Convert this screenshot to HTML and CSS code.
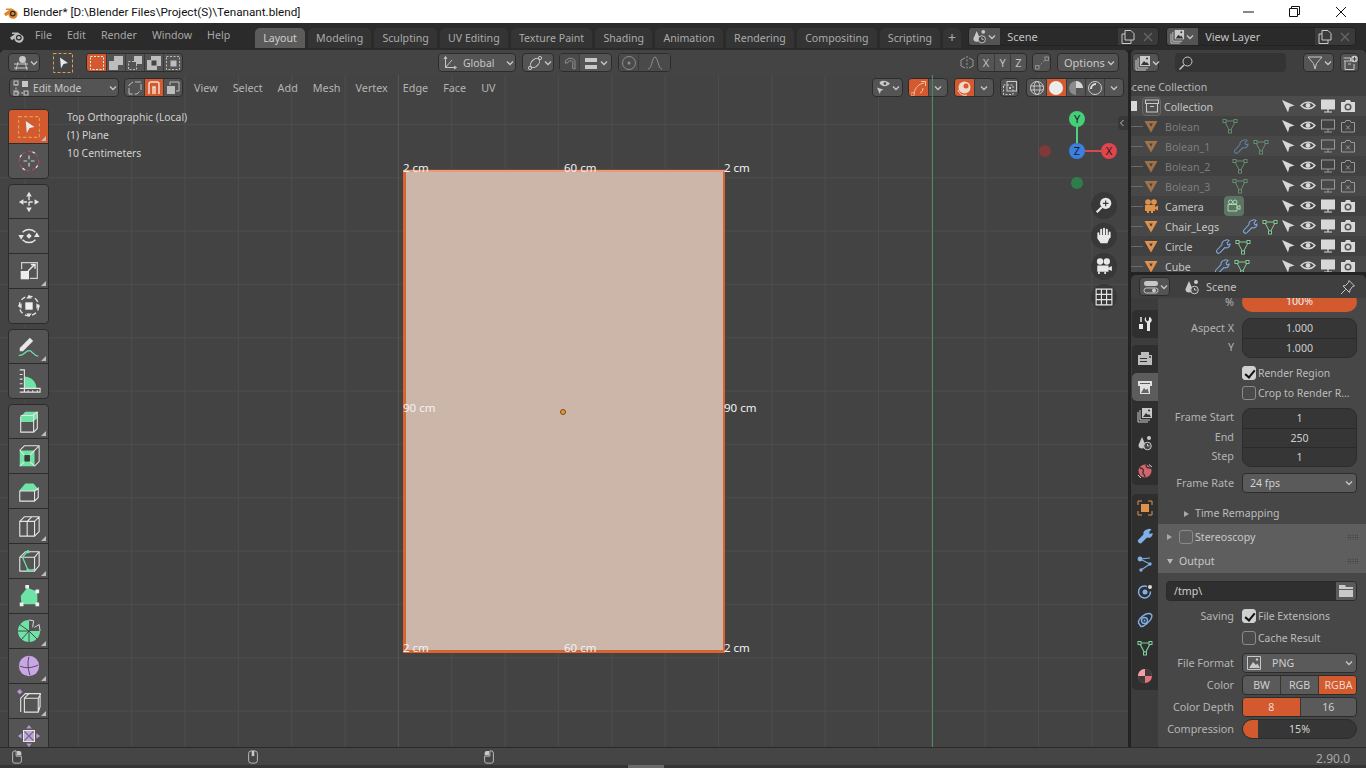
FILE: index.html
```html
<!DOCTYPE html>
<html lang="en">
<head>
    <meta charset="UTF-8">
    <title>Blender* [D:\Blender Files\Project(S)\Tenanant.blend]</title>
    <link rel="stylesheet" href="styles.css">
</head>
<body>
    <!-- shared icons -->
    <svg class="defs" width="0" height="0">
        <symbol id="i-logo" viewBox="0 0 16 16"><path d="M1 9.5 6 6 3 6V4.6h6L14 8a4.6 4.6 0 1 1-8.6 2.6L3 12.2 1.8 11Z" fill="currentColor"/><circle cx="9.8" cy="9.6" r="2.9" fill="#2b2b2b"/><circle cx="9.8" cy="9.6" r="1.7" fill="currentColor"/></symbol>
        <symbol id="i-chev" viewBox="0 0 10 10"><path d="M2 3.5 5 6.5 8 3.5" fill="none" stroke="currentColor" stroke-width="1.3"/></symbol>
        <symbol id="i-view3d" viewBox="0 0 16 16"><circle cx="9.5" cy="4.5" r="3.4" fill="currentColor"/><path d="M1 9h14M1 13h14M5 7 3 15M12 7l2 8" stroke="currentColor" fill="none"/></symbol>
        <symbol id="i-selbox" viewBox="0 0 22 22"><rect x="1.5" y="1.5" width="19" height="19" fill="none" stroke="#e0a050" stroke-dasharray="3 2"/><path d="M8 5.5 16 11 11.5 12 9 16.5Z" fill="#e8e8e8"/></symbol>
        <symbol id="i-mode1" viewBox="0 0 16 16"><rect x="1.5" y="1.5" width="13" height="13" fill="none" stroke="#eee" stroke-dasharray="2 1.5"/></symbol>
        <symbol id="i-mode2" viewBox="0 0 16 16"><path d="M1 6h5V1h9v9h-5v5H1Z" fill="#bdbdbd"/></symbol>
        <symbol id="i-mode3" viewBox="0 0 16 16"><path d="M7 1h8v8H9V7H7Z" fill="#bdbdbd"/><rect x="1.5" y="6.5" width="8" height="8" fill="none" stroke="#bdbdbd" stroke-dasharray="2 1.5"/></symbol>
        <symbol id="i-mode4" viewBox="0 0 16 16"><path d="M1 5h4V1h10v10h-4v4H1Z" fill="#bdbdbd"/><rect x="5.5" y="5.5" width="5" height="5" fill="#454545"/></symbol>
        <symbol id="i-mode5" viewBox="0 0 16 16"><rect x="1.5" y="1.5" width="13" height="13" fill="none" stroke="#bdbdbd" stroke-dasharray="2 1.5"/><rect x="5.5" y="5.5" width="6" height="6" fill="#bdbdbd"/></symbol>
        <symbol id="i-axes" viewBox="0 0 16 16"><path d="M3.5 2v10.5h10M3.5 12.5 10 5" stroke="currentColor" fill="none"/><path d="M2 4 3.5 1.500 5 4M12 11l2.5 1.5L12 14" stroke="currentColor" fill="none"/></symbol>
        <symbol id="i-pivot" viewBox="0 0 16 16"><ellipse cx="8" cy="8" rx="3.5" ry="5.5" transform="rotate(45 8 8)" fill="none" stroke="currentColor"/><circle cx="3" cy="13" r="1.6" fill="none" stroke="currentColor"/><circle cx="13" cy="3" r="1.6" fill="none" stroke="currentColor"/></symbol>
        <symbol id="i-magnet" viewBox="0 0 16 16"><path d="M3 8a5.500 5.500 0 0 1 10-2.500L13 14l-2.500-1 .5-6.500A3.500 3.500 0 0 0 5.500 8Z" fill="none" stroke="currentColor"/></symbol>
        <symbol id="i-snapinc" viewBox="0 0 16 16"><path d="M2 3h12v4H2ZM2 10h12v4H2Z" fill="currentColor"/></symbol>
        <symbol id="i-propdot" viewBox="0 0 16 16"><circle cx="8" cy="8" r="6.5" fill="none" stroke="currentColor"/><circle cx="8" cy="8" r="1.5" fill="currentColor"/></symbol>
        <symbol id="i-bell" viewBox="0 0 16 16"><path d="M1 14c4 0 4-12 7-12s3 12 7 12" fill="none" stroke="currentColor"/></symbol>
        <symbol id="i-mirror" viewBox="0 0 16 16"><path d="M8 1v14" stroke="currentColor" stroke-dasharray="2 1.5"/><path d="M6 3 2 5v6l4 2M10 3l4 2v6l-4 2" fill="none" stroke="currentColor"/></symbol>
        <symbol id="i-automerge" viewBox="0 0 16 16"><path d="M4 12 12 4" stroke="currentColor" stroke-dasharray="2 1.5"/><rect x="1.5" y="10.5" width="3.5" height="3.5" fill="none" stroke="currentColor"/><rect x="11" y="2" width="3.5" height="3.5" fill="none" stroke="currentColor"/></symbol>
        <symbol id="i-scene" viewBox="0 0 16 16"><path d="M5 2 8.5 10A3.500 3.500 0 0 1 1.500 10Z" fill="currentColor"/><circle cx="12" cy="3" r="2" fill="currentColor"/><circle cx="10.5" cy="11" r="3.8" fill="#454545" stroke="currentColor"/><path d="M10.5 9v2h2" stroke="currentColor" fill="none"/></symbol>
        <symbol id="i-copy" viewBox="0 0 16 16"><path d="M5 1.500h6l3 3V11H5Z M5 5H2v9.500h9V11" fill="none" stroke="currentColor"/></symbol>
        <symbol id="i-x" viewBox="0 0 16 16"><path d="M4 4l8 8M12 4l-8 8" stroke="currentColor" stroke-width="1.3"/></symbol>
        <symbol id="i-layers" viewBox="0 0 16 16"><rect x="5" y="1" width="10" height="10" fill="currentColor"/><path d="M6 10l3-4 2 2 1-1 2 3Z" fill="#333"/><circle cx="12" cy="3.5" r="1" fill="#333"/><path d="M3 3v10h10M1 5v10h10" fill="none" stroke="currentColor"/></symbol>
        <symbol id="i-search" viewBox="0 0 16 16"><circle cx="9.5" cy="6.5" r="4.5" fill="none" stroke="currentColor"/><path d="M6 10 1.500 14.500" stroke="currentColor" stroke-width="1.5"/></symbol>
        <symbol id="i-funnel" viewBox="0 0 16 16"><path d="M1 2h14L9.500 8.500 8 14 6.500 8.500Z" fill="none" stroke="currentColor"/></symbol>
        <symbol id="i-newcoll" viewBox="0 0 16 16"><path d="M2 6h9M3 6v8.500h9V9M1.500 3h7v3" fill="none" stroke="currentColor"/><path d="M6 9h3" stroke="currentColor"/><circle cx="12.5" cy="4" r="3.3" fill="currentColor"/><path d="M12.500 2v4M10.500 4h4" stroke="#444"/></symbol>
        <symbol id="i-wire" viewBox="0 0 16 16"><circle cx="8" cy="8" r="6.5" fill="none" stroke="currentColor"/><ellipse cx="8" cy="8" rx="3" ry="6.5" fill="none" stroke="currentColor"/><path d="M1.500 6h13M1.500 10h13" stroke="currentColor"/></symbol>
        <symbol id="i-solid" viewBox="0 0 16 16"><circle cx="8" cy="8" r="7" fill="#ececec"/></symbol>
        <symbol id="i-look" viewBox="0 0 16 16"><circle cx="8" cy="8" r="7" fill="#8a8a8a"/><path d="M8 1a7 7 0 0 1 7 7H8Z" fill="#d5d5d5"/><path d="M8 8h7a7 7 0 0 1-7 7Z" fill="#555"/></symbol>
        <symbol id="i-render" viewBox="0 0 16 16"><circle cx="8" cy="8" r="6.5" fill="#555" stroke="#ccc"/><path d="M4 9a5 5 0 0 1 5-5" stroke="#ddd" stroke-width="2" fill="none"/></symbol>
        <symbol id="i-visib" viewBox="0 0 16 16"><path d="M4 2c3-1.800 7-1.800 11 2-4 3.500-8 3.500-11 0Z" fill="currentColor"/><circle cx="9.5" cy="3.8" r="1.4" fill="#444"/><path d="M1 8l7 2.500-2.800 1L4 15Z" fill="currentColor"/></symbol>
        <symbol id="i-gizmo" viewBox="0 0 16 16"><path d="M3 14C4 7 8 4 13 3M10 1.500h4.500V6M1.500 12.500a1.800 1.800 0 1 0 .1 0M9 13a5 5 0 0 0 3-5" fill="none" stroke="#f3c5a8"/></symbol>
        <symbol id="i-overlay" viewBox="0 0 16 16"><circle cx="7.5" cy="7.5" r="6" fill="#f0d8cc"/><circle cx="9" cy="6" r="2.5" fill="#d45a2c"/><path d="M1 10a7 7 0 0 0 9 5" stroke="#f0d8cc" fill="none"/></symbol>
        <symbol id="i-xray" viewBox="0 0 16 16"><rect x="5" y="1.5" width="9.5" height="9.5" fill="none" stroke="currentColor"/><rect x="1.5" y="5" width="9.5" height="9.5" fill="none" stroke="currentColor" stroke-dasharray="2 1.5"/><rect x="7" y="7" width="2" height="2" fill="currentColor"/></symbol>
        <symbol id="i-vert" viewBox="0 0 16 16"><path d="M2 14V5l4-3h8v8l-4 4Z" fill="none" stroke="#bbb" stroke-dasharray="6 2"/></symbol>
        <symbol id="i-edge" viewBox="0 0 16 16"><path d="M3 14V4a2 2 0 0 1 2-2h6a2 2 0 0 1 2 2v10M7 14V7h2v7" fill="none" stroke="#f4ddcf" stroke-width="1.5"/></symbol>
        <symbol id="i-face" viewBox="0 0 16 16"><path d="M2 14V6h8v8Z" fill="#bdbdbd"/><path d="M5 5V2h9v9h-3" fill="none" stroke="#bdbdbd"/></symbol>
        <symbol id="i-editmode" viewBox="0 0 16 16"><path d="M3 4v9h9" fill="none" stroke="currentColor" stroke-dasharray="2 1.5"/><rect x="9" y="1" width="6" height="6" fill="currentColor"/><rect x="1" y="1" width="4" height="4" fill="none" stroke="currentColor"/><rect x="1" y="11" width="4" height="4" fill="none" stroke="currentColor"/><rect x="11" y="11" width="4" height="4" fill="none" stroke="currentColor"/></symbol>

        <!-- toolbar -->
        <symbol id="t-cursor" viewBox="0 0 26 26"><circle cx="13" cy="13" r="10.5" fill="none" stroke="#a8475a" stroke-width="1.5" stroke-dasharray="5 3"/><circle cx="13" cy="13" r="10.5" fill="none" stroke="#e4e4e4" stroke-width="1.5" stroke-dasharray="3 13" stroke-dashoffset="-5"/><path d="M13 7v4M13 15v4M7 13h4M15 13h4" stroke="#cfcfcf" stroke-width="1.3"/></symbol>
        <symbol id="t-move" viewBox="0 0 26 26"><path d="M13 2 16 7H10ZM13 24l3-5H10ZM2 13l5-3v6ZM24 13l-5-3v6Z" fill="#e4e4e4"/><path d="M13 7v12M7 13h12" stroke="#e4e4e4" stroke-width="1.5" stroke-dasharray="4 2"/></symbol>
        <symbol id="t-rotate" viewBox="0 0 26 26"><path d="M6 9A9.500 9.500 0 0 1 20 9M20 17A9.500 9.500 0 0 1 6 17" fill="none" stroke="#e4e4e4" stroke-width="1.5"/><path d="M13 10l3 3-3 3-3-3ZM1.500 12h6l-3 5ZM24.500 14h-6l3-5Z" fill="#e4e4e4"/></symbol>
        <symbol id="t-scale" viewBox="0 0 26 26"><path d="M5 11V4h17v17h-8" fill="none" stroke="#d0d0d0" stroke-width="1.3"/><rect x="4" y="13" width="9" height="9" fill="#ececec"/><path d="M12 13l7-7M15 6h4.500v4.500" fill="none" stroke="#ececec" stroke-width="1.5"/></symbol>
        <symbol id="t-transform" viewBox="0 0 26 26"><circle cx="13" cy="13" r="10.5" fill="none" stroke="#e4e4e4" stroke-width="1.5" stroke-dasharray="5 3"/><rect x="9" y="9" width="8" height="8" fill="#f0f0f0"/><path d="M13 1l3 4h-6ZM13 25l3-4h-6ZM1 13l4-3v6ZM25 13l-4-3v6Z" fill="#e4e4e4"/></symbol>
        <symbol id="t-annotate" viewBox="0 0 26 26"><path d="M3 14 14 3l3.500 3.500-11 11H3Z" fill="#e8e8e8"/><path d="M2 22c5 1 7-5 11-5s4 5 10 6" fill="none" stroke="#6fe3a6" stroke-width="1.4"/></symbol>
        <symbol id="t-measure" viewBox="0 0 26 26"><path d="M8 8a13 13 0 0 1 13 13H8Z" fill="#6fe3a6"/><path d="M3 1h5v24H3M3 21h22v4H3M3 6h3M3 11h3M3 16h3M12 23v2M17 23v2M22 23v2" fill="none" stroke="#e4e4e4" stroke-width="1.2"/></symbol>
        <symbol id="t-extrude" viewBox="0 0 26 26"><path d="M4 7 9 2h13v7l-5 4H4Z" fill="#6fe3a6"/><path d="M17 6H4M17 6l5-4M4 7v17h14V6M18 24l4-4V2" fill="none" stroke="#e4e4e4" stroke-width="1.2"/></symbol>
        <symbol id="t-inset" viewBox="0 0 26 26"><path d="M3 7h16v17H3Z" fill="#6fe3a6"/><rect x="8" y="12" width="6" height="7" fill="#3a3a3a"/><path d="M3 7l5 5M19 7l-5 5M3 24l5-5M19 24l-5-5M3 7l5-5h16v17l-5 5M19 7l5-5" fill="none" stroke="#e4e4e4" stroke-width="1.1"/></symbol>
        <symbol id="t-bevel" viewBox="0 0 26 26"><path d="M3 12 9 5h9l5 6-4 2H3Z" fill="#6fe3a6"/><path d="M3 13h16v11H3ZM19 13l4-3v10l-4 4" fill="none" stroke="#e4e4e4" stroke-width="1.2"/></symbol>
        <symbol id="t-loop" viewBox="0 0 26 26"><path d="M3 8h8v16H3ZM11 8h8v16h-8ZM3 8l5-5h16v16l-5 5M11 8l5-5M19 8l5-5" fill="none" stroke="#e4e4e4" stroke-width="1.2"/></symbol>
        <symbol id="t-knife" viewBox="0 0 26 26"><path d="M3 9h16v15H3ZM3 9l6-6h15v15l-5 6M19 9l5-6" fill="none" stroke="#e4e4e4" stroke-width="1.2"/><path d="M12 2 6 9l6 14 7-1" fill="none" stroke="#6fe3a6" stroke-width="1.3"/><circle cx="12" cy="3" r="1.8" fill="#6fe3a6"/><circle cx="12" cy="23" r="1.8" fill="#6fe3a6"/></symbol>
        <symbol id="t-poly" viewBox="0 0 26 26"><path d="M11 4 22 8 22 22H5L4 13Z" fill="#6fe3a6"/><path d="M9 1h4v4H9ZM20 6h4v4h-4ZM20 20h4v4h-4ZM3 20h4v4H3Z" fill="#eee"/></symbol>
        <symbol id="t-spin" viewBox="0 0 26 26"><path d="M13 13V1A12 12 0 0 0 1 13a12 12 0 0 0 24 0Z" fill="#6fe3a6"/><path d="M13 13 3 6M13 13H1M13 13l-8 9M13 13v12M13 13l9 9" stroke="#3f3f3f"/><path d="M13 1l5 1-1 7M25 13l-1-7-5 3" fill="none" stroke="#e4e4e4"/></symbol>
        <symbol id="t-smooth" viewBox="0 0 26 26"><circle cx="13" cy="13" r="11" fill="#c9a6e6"/><path d="M3 13c7 3 13 2 20-1M13 3c-2 7-1 13 1 20" fill="none" stroke="#49424f"/></symbol>
        <symbol id="t-slide" viewBox="0 0 26 26"><path d="M8 10h15v15H8ZM8 10l5-5h12v14l-2 6M23 10l3-5M4 25V10l5-5h5" fill="none" stroke="#e4e4e4" stroke-width="1.2"/><path d="M3 0l3 3-3 3-3-3Z" fill="#b596d6"/></symbol>
        <symbol id="t-shrink" viewBox="0 0 26 26"><rect x="7" y="7" width="12" height="12" fill="#bdaccc" stroke="#eee"/><path d="M8 8l10 10M18 8 8 18" stroke="#7a5f96" stroke-width="1.5"/><path d="M13 1l3 4h-6ZM13 25l3-4h-6ZM1 13l4-3v6ZM25 13l-4-3v6Z" fill="#b596d6"/></symbol>

        <!-- outliner -->
        <symbol id="o-coll" viewBox="0 0 16 16"><path d="M1.500 2h13v3.500h-13ZM2.500 5.500v8.500h11V5.500M6 8.500h4" fill="none" stroke="currentColor" stroke-width="1.1"/></symbol>
        <symbol id="o-mesh" viewBox="0 0 16 16"><path d="M1.500 3h13L8 14.500Z" fill="#e0914c"/><path d="M6.200 5.500h3.600L8 8.800Z" fill="#3f3f3f"/></symbol>
        <symbol id="o-camobj" viewBox="0 0 16 16"><circle cx="5" cy="4" r="2.8" fill="#e0914c"/><circle cx="11" cy="4" r="2.8" fill="#e0914c"/><path d="M2 7h10v6H2ZM12 9l3-1.500v5L12 11Z" fill="#e0914c"/><path d="M5 13v2M9 13v2" stroke="#e0914c" stroke-width="2"/></symbol>
        <symbol id="o-wrench" viewBox="0 0 16 16"><path d="M10 2.500a3.500 3.500 0 0 1 4 0L12 5l1 2 2-1a3.500 3.500 0 0 1-5 3.500L5 14.500a1.800 1.800 0 0 1-3-2.500L7 6.500A3.500 3.500 0 0 1 10 2.500Z" fill="none" stroke="currentColor" stroke-width="1.1"/></symbol>
        <symbol id="o-tridata" viewBox="0 0 16 16"><path d="M2.500 3h11L8 13.500Z" fill="none" stroke="currentColor"/><rect x="1" y="1.5" width="3" height="3" fill="#333" stroke="currentColor"/><rect x="12" y="1.5" width="3" height="3" fill="#333" stroke="currentColor"/><rect x="6.5" y="12" width="3" height="3" fill="#333" stroke="currentColor"/></symbol>
        <symbol id="o-camdata" viewBox="0 0 16 16"><path d="M2 6.500h9V13H2ZM11 9l3-1.500v4L11 10Z" fill="none" stroke="currentColor"/><circle cx="4.5" cy="4" r="2" fill="none" stroke="currentColor"/><circle cx="9" cy="4" r="2" fill="none" stroke="currentColor"/></symbol>
        <symbol id="o-arrow" viewBox="0 0 16 16"><path d="M2 2 14.500 7.500 9.500 9 8 14.500Z" fill="currentColor"/></symbol>
        <symbol id="o-eye" viewBox="0 0 16 16"><path d="M1 7.500C5 3 11 3 15 7.500 11 12 5 12 1 7.500Z" fill="none" stroke="currentColor" stroke-width="1.3"/><circle cx="8" cy="7.5" r="2.4" fill="currentColor"/></symbol>
        <symbol id="o-mon" viewBox="0 0 16 16"><rect x="1.5" y="2" width="13" height="9" fill="currentColor" stroke="currentColor"/><path d="M4 14h8M8 11v3" stroke="currentColor" stroke-width="1.2"/></symbol>
        <symbol id="o-monoff" viewBox="0 0 16 16"><rect x="1.5" y="2" width="13" height="9" fill="none" stroke="currentColor"/><path d="M4 14h8M8 11v3" stroke="currentColor"/></symbol>
        <symbol id="o-cam" viewBox="0 0 16 16"><path d="M1 4h4l1-2h4l1 2h4v10H1Z" fill="currentColor"/><circle cx="8" cy="9" r="3.5" fill="#555"/><circle cx="8" cy="9" r="2" fill="currentColor"/></symbol>
        <symbol id="o-camoff" viewBox="0 0 16 16"><path d="M1.500 4.500h3.500l1-2h4l1 2h3.500v9.500h-13Z" fill="none" stroke="currentColor"/><path d="M6 7.500l4 4M10 7.500l-4 4" stroke="currentColor"/></symbol>

        <!-- property tabs -->
        <symbol id="p-tool" viewBox="0 0 16 16"><path d="M4 1v5" stroke="#e8e8e8" stroke-width="1.5"/><path d="M2 8h4v5H2Z" fill="#e8e8e8"/><path d="M9 1v3l1.500 1.500L12 4V1a3 3 0 0 1 2 5l-1 1v8h-3V7L9 6A3 3 0 0 1 9 1Z" fill="#e8e8e8"/></symbol>
        <symbol id="p-render" viewBox="0 0 16 16"><path d="M1 4h14v10H1ZM4 1h8v3H4Z" fill="#bdbdbd"/><path d="M3 7h7v1H3ZM3 10h7v1H3Z" fill="#333"/><circle cx="13" cy="6" r="1" fill="#333"/></symbol>
        <symbol id="p-output" viewBox="0 0 16 16"><path d="M1 2h14v5h-2V4H3v3H1Z" fill="#e0e0e0"/><path d="M3 5h10v10H3Z" fill="#e0e0e0"/><path d="M4 14l3-5 2 2 1.500-1.500L12 14Z" fill="#666"/></symbol>
        <symbol id="p-world" viewBox="0 0 16 16"><circle cx="8" cy="8" r="6.5" fill="#d0656b"/><path d="M3 5c3 0 4 2 3 4s2 2 2 5M9 2c0 3 2 3 5 3" fill="none" stroke="#3d2b2e" stroke-width="1.3"/><path d="M12 1.500 15 4M1 12l3 3" stroke="#cfcfcf"/></symbol>
        <symbol id="p-object" viewBox="0 0 16 16"><path d="M1 5V1h4M11 1h4v4M15 11v4h-4M5 15H1v-4" fill="none" stroke="#e0914c"/><rect x="4" y="4" width="8" height="8" fill="#e0914c"/></symbol>
        <symbol id="p-mod" viewBox="0 0 16 16"><path d="M10 1.500a4 4 0 0 1 4.500 0L12 4l1 2 2.500-1a4 4 0 0 1-5.500 4.500L5 14.500a2 2 0 0 1-3.500-3L6.500 6.500A4 4 0 0 1 10 1.500Z" fill="#7fb0e8"/></symbol>
        <symbol id="p-part" viewBox="0 0 16 16"><path d="M3 3 13 8 4 14M3 3l10-1" fill="none" stroke="#7fb0e8" stroke-width="1.1"/><circle cx="3" cy="3" r="2.4" fill="#7fb0e8"/><circle cx="13" cy="8" r="1.7" fill="#7fb0e8"/><circle cx="4" cy="14" r="1.7" fill="#7fb0e8"/></symbol>
        <symbol id="p-phys" viewBox="0 0 16 16"><path d="M10 2.500a6 6 0 1 0 3.500 5" fill="none" stroke="#7fb0e8" stroke-width="1.5"/><circle cx="8" cy="8" r="2.5" fill="#7fb0e8"/><circle cx="13" cy="3" r="2" fill="#dcdcdc"/></symbol>
        <symbol id="p-constr" viewBox="0 0 16 16"><path d="M1.500 11C1 7 8 1 12 1.500s3 3.500 2 5.500S7 15 4 14.500Z" fill="none" stroke="#7fb0e8" stroke-width="1.4"/><circle cx="7.5" cy="8.5" r="3" fill="none" stroke="#7fb0e8" stroke-width="1.4"/><circle cx="7.5" cy="8.5" r="1" fill="#7fb0e8"/></symbol>
        <symbol id="p-data" viewBox="0 0 16 16"><path d="M2.500 3h11L8 13.500Z" fill="none" stroke="#7ed29b" stroke-width="1.1"/><rect x="1" y="1.5" width="3" height="3" fill="#333" stroke="#7ed29b"/><rect x="12" y="1.5" width="3" height="3" fill="#333" stroke="#7ed29b"/><rect x="6.5" y="12" width="3" height="3" fill="#333" stroke="#7ed29b"/></symbol>
        <symbol id="p-mat" viewBox="0 0 16 16"><circle cx="8" cy="8" r="7" fill="#e5737c"/><path d="M8 1a7 7 0 0 1 7 7H8ZM8 8v7a7 7 0 0 1-7-7Z" fill="#3a3a3a"/><path d="M8 1a7 7 0 0 0-7 7h7Z" fill="#f0a0a6"/></symbol>
        <symbol id="i-prefs" viewBox="0 0 16 16"><rect x="1" y="2" width="14" height="5" rx="2.5" fill="currentColor"/><rect x="1" y="9" width="14" height="5" rx="2.5" fill="none" stroke="currentColor"/><circle cx="11" cy="11.5" r="2" fill="currentColor"/></symbol>
        <symbol id="i-pin" viewBox="0 0 16 16"><path d="M9 1.500 14.500 7l-2 .5L10 11l-.5 2.500L3 7l2.500-.5L8.500 3.500ZM5.500 10.500 1 15" fill="none" stroke="currentColor"/></symbol>
        <symbol id="i-folder" viewBox="0 0 16 16"><path d="M1 2h6l1 2h7v2H1ZM1 7h14v7H1Z" fill="currentColor"/></symbol>
        <symbol id="i-image" viewBox="0 0 16 16"><path d="M1.500 1.500h13v13h-13Z" fill="none" stroke="currentColor"/><path d="M3 13l4-6 3 3 1.500-1.500L14 13Z" fill="currentColor"/><circle cx="11" cy="4.5" r="1.2" fill="currentColor"/></symbol>
        <symbol id="i-mouse" viewBox="0 0 12 16"><path d="M5 1H3.500A2.500 2.500 0 0 0 1 3.500v9A2.500 2.500 0 0 0 3.500 15h5a2.500 2.500 0 0 0 2.500-2.500V7H5Z" fill="none" stroke="currentColor"/><path d="M6 1h2.500A2.500 2.500 0 0 1 11 3.500V6H6Z" fill="currentColor"/></symbol>
        <symbol id="i-mousem" viewBox="0 0 12 16"><rect x="1" y="1" width="10" height="14" rx="3" fill="none" stroke="currentColor"/><rect x="4.5" y="1" width="3" height="6" fill="currentColor"/></symbol>
        <symbol id="i-mouser" viewBox="0 0 12 16"><path d="M7 1h1.500A2.500 2.500 0 0 1 11 3.500v9A2.500 2.500 0 0 1 8.500 15h-5A2.500 2.500 0 0 1 1 12.500V7h6Z" fill="none" stroke="currentColor"/><path d="M6 1H3.500A2.500 2.500 0 0 0 1 3.500V6h5Z" fill="currentColor"/></symbol>
    </svg>

    <div class="titlebar">
        <svg class="title-logo"><use href="#i-logo"/></svg>
        <span class="title-text">Blender* [D:\Blender Files\Project(S)\Tenanant.blend]</span>
        <div class="winbtns">
            <svg width="12" height="12" viewBox="0 0 12 12"><path d="M0 6h11" stroke="#111"/></svg>
            <svg width="12" height="12" viewBox="0 0 12 12"><path d="M.5 2.500h8v8h-8ZM2.500 2.500v-2h8v8h-2" fill="none" stroke="#111"/></svg>
            <svg width="12" height="12" viewBox="0 0 12 12"><path d="M1 1l10 10M11 1 1 11" stroke="#111"/></svg>
        </div>
    </div>

    <div class="topbar">
        <svg class="top-logo"><use href="#i-logo"/></svg>
        <nav class="menus">
            <span>File</span><span>Edit</span><span>Render</span><span>Window</span><span>Help</span>
        </nav>
        <div class="tabs">
            <span class="tab active">Layout</span>
            <span class="tab">Modeling</span>
            <span class="tab">Sculpting</span>
            <span class="tab">UV Editing</span>
            <span class="tab">Texture Paint</span>
            <span class="tab">Shading</span>
            <span class="tab">Animation</span>
            <span class="tab">Rendering</span>
            <span class="tab">Compositing</span>
            <span class="tab">Scripting</span>
            <span class="tab tab-add">+</span>
        </div>
        <div class="datablock scene-block">
            <span class="db-type"><svg class="ic"><use href="#i-scene"/></svg><svg class="chev"><use href="#i-chev"/></svg></span>
            <span class="db-name">Scene</span>
            <span class="db-btn"><svg class="ic"><use href="#i-copy"/></svg></span>
            <span class="db-btn dim"><svg class="ic"><use href="#i-x"/></svg></span>
        </div>
        <div class="datablock layer-block">
            <span class="db-type"><svg class="ic"><use href="#i-layers"/></svg><svg class="chev"><use href="#i-chev"/></svg></span>
            <span class="db-name">View Layer</span>
            <span class="db-btn"><svg class="ic"><use href="#i-copy"/></svg></span>
            <span class="db-btn dim"><svg class="ic"><use href="#i-x"/></svg></span>
        </div>
    </div>

    <div class="workspace">
        <section class="viewport">
            <div class="toolhead">
                <span class="btn w32"><svg class="ic"><use href="#i-view3d"/></svg><svg class="chev"><use href="#i-chev"/></svg></span>
                <svg class="active-tool"><use href="#i-selbox"/></svg>
                <div class="seg modes">
                    <span class="on"><svg class="ic"><use href="#i-mode1"/></svg></span>
                    <span><svg class="ic"><use href="#i-mode2"/></svg></span>
                    <span><svg class="ic"><use href="#i-mode3"/></svg></span>
                    <span><svg class="ic"><use href="#i-mode4"/></svg></span>
                    <span><svg class="ic"><use href="#i-mode5"/></svg></span>
                </div>
                <span class="btn orient"><svg class="ic"><use href="#i-axes"/></svg><em>Global</em><svg class="chev"><use href="#i-chev"/></svg></span>
                <span class="btn w32 pivot"><svg class="ic"><use href="#i-pivot"/></svg><svg class="chev"><use href="#i-chev"/></svg></span>
                <div class="seg snap">
                    <span class="dimmed"><svg class="ic"><use href="#i-magnet"/></svg></span>
                    <span class="wide"><svg class="ic"><use href="#i-snapinc"/></svg><svg class="chev"><use href="#i-chev"/></svg></span>
                </div>
                <div class="seg prop">
                    <span class="dimmed"><svg class="ic"><use href="#i-propdot"/></svg></span>
                    <span class="dimmed wide"><svg class="ic"><use href="#i-bell"/></svg></span>
                </div>
                <svg class="ic mirror"><use href="#i-mirror"/></svg>
                <div class="seg xyz"><span>X</span><span>Y</span><span>Z</span></div>
                <span class="btn w18 automerge"><svg class="ic"><use href="#i-automerge"/></svg></span>
                <span class="btn options">Options<svg class="chev"><use href="#i-chev"/></svg></span>
            </div>

            <div class="modehead">
                <span class="btn editmode"><svg class="ic"><use href="#i-editmode"/></svg><em>Edit Mode</em><svg class="chev"><use href="#i-chev"/></svg></span>
                <div class="seg selmodes">
                    <span><svg class="ic"><use href="#i-vert"/></svg></span>
                    <span class="on"><svg class="ic"><use href="#i-edge"/></svg></span>
                    <span><svg class="ic"><use href="#i-face"/></svg></span>
                </div>
                <nav class="vmenu">
                    <span>View</span><span>Select</span><span>Add</span><span>Mesh</span><span>Vertex</span><span>Edge</span><span>Face</span><span>UV</span>
                </nav>
                <span class="btn w30 visib"><svg class="ic"><use href="#i-visib"/></svg><svg class="chev"><use href="#i-chev"/></svg></span>
                <div class="seg pair">
                    <span class="on"><svg class="ic"><use href="#i-gizmo"/></svg></span>
                    <span><svg class="chev"><use href="#i-chev"/></svg></span>
                </div>
                <div class="seg pair">
                    <span class="on"><svg class="ic"><use href="#i-overlay"/></svg></span>
                    <span><svg class="chev"><use href="#i-chev"/></svg></span>
                </div>
                <span class="btn w18 xray"><svg class="ic"><use href="#i-xray"/></svg></span>
                <div class="seg shading">
                    <span><svg class="ic"><use href="#i-wire"/></svg></span>
                    <span class="on"><svg class="ic"><use href="#i-solid"/></svg></span>
                    <span><svg class="ic"><use href="#i-look"/></svg></span>
                    <span><svg class="ic"><use href="#i-render"/></svg></span>
                    <span><svg class="chev"><use href="#i-chev"/></svg></span>
                </div>
            </div>

            <div class="viewinfo">
                <p>Top Orthographic (Local)</p>
                <p>(1) Plane</p>
                <p>10 Centimeters</p>
            </div>

            <div class="axis-y"></div>
            <div class="grid-major"></div>

            <div class="plane"><span class="origin"></span></div>
            <span class="len l-tl">2 cm</span>
            <span class="len l-tc">60 cm</span>
            <span class="len l-tr">2 cm</span>
            <span class="len l-ml">90 cm</span>
            <span class="len l-mr">90 cm</span>
            <span class="len l-bl">2 cm</span>
            <span class="len l-bc">60 cm</span>
            <span class="len l-br">2 cm</span>

            <aside class="toolbar">
                <div class="toolgroup">
                    <span class="tool on corner"><svg><use href="#i-selbox"/></svg></span>
                    <span class="tool"><svg><use href="#t-cursor"/></svg></span>
                </div>
                <div class="toolgroup">
                    <span class="tool"><svg><use href="#t-move"/></svg></span>
                    <span class="tool"><svg><use href="#t-rotate"/></svg></span>
                    <span class="tool corner"><svg><use href="#t-scale"/></svg></span>
                    <span class="tool"><svg><use href="#t-transform"/></svg></span>
                </div>
                <div class="toolgroup">
                    <span class="tool corner"><svg><use href="#t-annotate"/></svg></span>
                    <span class="tool"><svg><use href="#t-measure"/></svg></span>
                </div>
                <div class="toolgroup">
                    <span class="tool corner"><svg><use href="#t-extrude"/></svg></span>
                    <span class="tool"><svg><use href="#t-inset"/></svg></span>
                    <span class="tool"><svg><use href="#t-bevel"/></svg></span>
                    <span class="tool corner"><svg><use href="#t-loop"/></svg></span>
                    <span class="tool corner"><svg><use href="#t-knife"/></svg></span>
                    <span class="tool"><svg><use href="#t-poly"/></svg></span>
                    <span class="tool corner"><svg><use href="#t-spin"/></svg></span>
                    <span class="tool corner"><svg><use href="#t-smooth"/></svg></span>
                    <span class="tool corner"><svg><use href="#t-slide"/></svg></span>
                    <span class="tool"><svg><use href="#t-shrink"/></svg></span>
                </div>
            </aside>

            <svg class="navgizmo" width="88" height="88" viewBox="0 0 88 88">
                <circle cx="12" cy="44" r="6" fill="#803838"/>
                <circle cx="44" cy="76" r="6" fill="#2f7d4a"/>
                <path d="M44 12v32" stroke="#4fd07e" stroke-width="2"/>
                <path d="M44 44h32" stroke="#d9474f" stroke-width="2"/>
                <circle cx="44" cy="12" r="8" fill="#45cf78"/>
                <circle cx="76" cy="44" r="8" fill="#e0444c"/>
                <circle cx="44" cy="44" r="8" fill="#3b7fe0"/>
                <text x="44" y="16" class="gz">Y</text>
                <text x="76" y="48" class="gz">X</text>
                <text x="44" y="48" class="gz">Z</text>
            </svg>

            <div class="navbtns">
                <span><svg width="18" height="18" viewBox="0 0 16 16"><circle cx="9.5" cy="6.5" r="5" fill="#e8e8e8"/><path d="M9.500 4v5M7 6.500h5" stroke="#333"/><path d="M6 10 1.500 14.500" stroke="#e8e8e8" stroke-width="2"/></svg></span>
                <span><svg width="18" height="18" viewBox="0 0 16 16"><path d="M3 9V5.500M5.500 8V2.500M8 8V1.500M10.500 8V2.500M13 9V5" stroke="#e8e8e8" stroke-width="1.8" stroke-linecap="round"/><path d="M3 8 2 10l3 4.500h6l2.500-6V7H3Z" fill="#e8e8e8"/></svg></span>
                <span><svg width="18" height="18" viewBox="0 0 16 16"><circle cx="4.5" cy="4" r="2.8" fill="#e8e8e8"/><circle cx="10.5" cy="4" r="2.8" fill="#e8e8e8"/><path d="M2 7.500h10V13H2ZM12 9.500l3-1.500v4.500L12 11Z" fill="#e8e8e8"/><path d="M3.500 13v2M9 13v2" stroke="#e8e8e8" stroke-width="1.5"/></svg></span>
                <span><svg width="18" height="18" viewBox="0 0 16 16"><path d="M1 1h14v14H1ZM1 5.700h14M1 10.300h14M5.700 1v14M10.300 1v14" fill="none" stroke="#e8e8e8"/></svg></span>
            </div>

            <span class="side-arrow"><svg width="8" height="8" viewBox="0 0 8 8"><path d="M5.500 1 2.500 4l3 3" fill="none" stroke="#bbb"/></svg></span>
        </section>

        <div class="rightcol">
            <section class="outliner">
                <div class="ol-head">
                    <span class="btn w26"><svg class="ic"><use href="#i-layers"/></svg><svg class="chev"><use href="#i-chev"/></svg></span>
                    <span class="ol-search"><svg class="ic"><use href="#i-search"/></svg></span>
                    <span class="btn w30 ol-filter"><svg class="ic"><use href="#i-funnel"/></svg><svg class="chev"><use href="#i-chev"/></svg></span>
                    <span class="btn w18"><svg class="ic"><use href="#i-newcoll"/></svg></span>
                </div>
                <div class="ol-root">Scene Collection</div>
                <div class="ol-row coll">
                    <span class="check-clip"></span>
                    <span class="coll-ic"><svg class="ic"><use href="#o-coll"/></svg></span>
                    <span class="name">Collection</span>
                    <span class="restrict"><svg class="ic"><use href="#o-arrow"/></svg><svg class="ic"><use href="#o-eye"/></svg><svg class="ic"><use href="#o-mon"/></svg><svg class="ic"><use href="#o-cam"/></svg></span>
                </div>
                <div class="ol-row off">
                    <svg class="ic tree"><use href="#o-mesh"/></svg><span class="name">Bolean</span>
                    <svg class="ic data"><use href="#o-tridata"/></svg>
                    <span class="restrict"><svg class="ic"><use href="#o-arrow"/></svg><svg class="ic"><use href="#o-eye"/></svg><svg class="ic"><use href="#o-monoff"/></svg><svg class="ic"><use href="#o-camoff"/></svg></span>
                </div>
                <div class="ol-row off alt">
                    <svg class="ic tree"><use href="#o-mesh"/></svg><span class="name">Bolean_1</span>
                    <svg class="ic mod"><use href="#o-wrench"/></svg><svg class="ic data tight"><use href="#o-tridata"/></svg>
                    <span class="restrict"><svg class="ic"><use href="#o-arrow"/></svg><svg class="ic"><use href="#o-eye"/></svg><svg class="ic"><use href="#o-monoff"/></svg><svg class="ic"><use href="#o-camoff"/></svg></span>
                </div>
                <div class="ol-row off">
                    <svg class="ic tree"><use href="#o-mesh"/></svg><span class="name">Bolean_2</span>
                    <svg class="ic data"><use href="#o-tridata"/></svg>
                    <span class="restrict"><svg class="ic"><use href="#o-arrow"/></svg><svg class="ic"><use href="#o-eye"/></svg><svg class="ic"><use href="#o-monoff"/></svg><svg class="ic"><use href="#o-camoff"/></svg></span>
                </div>
                <div class="ol-row off alt">
                    <svg class="ic tree"><use href="#o-mesh"/></svg><span class="name">Bolean_3</span>
                    <svg class="ic data"><use href="#o-tridata"/></svg>
                    <span class="restrict"><svg class="ic"><use href="#o-arrow"/></svg><svg class="ic"><use href="#o-eye"/></svg><svg class="ic"><use href="#o-monoff"/></svg><svg class="ic"><use href="#o-camoff"/></svg></span>
                </div>
                <div class="ol-row">
                    <svg class="ic tree"><use href="#o-camobj"/></svg><span class="name">Camera</span>
                    <span class="camdata"><svg class="ic"><use href="#o-camdata"/></svg></span>
                    <span class="restrict"><svg class="ic"><use href="#o-arrow"/></svg><svg class="ic"><use href="#o-eye"/></svg><svg class="ic"><use href="#o-mon"/></svg><svg class="ic"><use href="#o-cam"/></svg></span>
                </div>
                <div class="ol-row alt">
                    <svg class="ic tree"><use href="#o-mesh"/></svg><span class="name">Chair_Legs</span>
                    <svg class="ic mod"><use href="#o-wrench"/></svg><svg class="ic data tight"><use href="#o-tridata"/></svg>
                    <span class="restrict"><svg class="ic"><use href="#o-arrow"/></svg><svg class="ic"><use href="#o-eye"/></svg><svg class="ic"><use href="#o-mon"/></svg><svg class="ic"><use href="#o-cam"/></svg></span>
                </div>
                <div class="ol-row">
                    <svg class="ic tree"><use href="#o-mesh"/></svg><span class="name">Circle</span>
                    <svg class="ic mod"><use href="#o-wrench"/></svg><svg class="ic data tight"><use href="#o-tridata"/></svg>
                    <span class="restrict"><svg class="ic"><use href="#o-arrow"/></svg><svg class="ic"><use href="#o-eye"/></svg><svg class="ic"><use href="#o-mon"/></svg><svg class="ic"><use href="#o-cam"/></svg></span>
                </div>
                <div class="ol-row alt">
                    <svg class="ic tree"><use href="#o-mesh"/></svg><span class="name">Cube</span>
                    <svg class="ic mod"><use href="#o-wrench"/></svg><svg class="ic data tight"><use href="#o-tridata"/></svg>
                    <span class="restrict"><svg class="ic"><use href="#o-arrow"/></svg><svg class="ic"><use href="#o-eye"/></svg><svg class="ic"><use href="#o-mon"/></svg><svg class="ic"><use href="#o-cam"/></svg></span>
                </div>
            </section>

            <section class="props">
                <div class="pr-head">
                    <span class="btn w30"><svg class="ic"><use href="#i-prefs"/></svg><svg class="chev"><use href="#i-chev"/></svg></span>
                    <svg class="ic pr-scene"><use href="#i-scene"/></svg>
                    <span class="pr-title">Scene</span>
                    <svg class="ic pr-pin"><use href="#i-pin"/></svg>
                </div>
                <div class="pr-body">
                    <div class="pr-tabs">
                        <span class="ptab single"><svg class="ic"><use href="#p-tool"/></svg></span>
                        <div class="ptabs">
                            <span class="ptab"><svg class="ic"><use href="#p-render"/></svg></span>
                            <span class="ptab active"><svg class="ic"><use href="#p-output"/></svg></span>
                            <span class="ptab"><svg class="ic"><use href="#i-layers"/></svg></span>
                            <span class="ptab"><svg class="ic"><use href="#i-scene"/></svg></span>
                            <span class="ptab"><svg class="ic"><use href="#p-world"/></svg></span>
                        </div>
                        <div class="ptabs">
                            <span class="ptab"><svg class="ic"><use href="#p-object"/></svg></span>
                            <span class="ptab"><svg class="ic"><use href="#p-mod"/></svg></span>
                            <span class="ptab"><svg class="ic"><use href="#p-part"/></svg></span>
                            <span class="ptab"><svg class="ic"><use href="#p-phys"/></svg></span>
                            <span class="ptab"><svg class="ic"><use href="#p-constr"/></svg></span>
                            <span class="ptab"><svg class="ic"><use href="#p-data"/></svg></span>
                            <span class="ptab"><svg class="ic"><use href="#p-mat"/></svg></span>
                        </div>
                    </div>

                    <div class="pr-content">
                        <div class="panel-top">
                            <div class="row first"><label>%</label><span class="slider-full">100%</span></div>
                            <div class="row"><label class="stack">Aspect X<br>Y</label>
                                <div class="numgroup"><span>1.000</span><span>1.000</span></div>
                            </div>
                            <div class="chk gap"><i class="box checked"></i>Render Region</div>
                            <div class="chk"><i class="box"></i>Crop to Render R...</div>
                            <div class="row frames"><label class="stack">Frame Start<br>End<br>Step</label>
                                <div class="numgroup"><span>1</span><span>250</span><span>1</span></div>
                            </div>
                            <div class="row"><label>Frame Rate</label><span class="select">24 fps<svg class="chev"><use href="#i-chev"/></svg></span></div>
                            <div class="subpanel"><b class="tri right"></b>Time Remapping</div>
                        </div>
                        <div class="panel-head"><b class="tri right"></b><i class="box"></i><span>Stereoscopy</span><u class="grip"></u></div>
                        <div class="panel-head open"><b class="tri down"></b><span>Output</span><u class="grip"></u></div>
                        <div class="panel-out">
                            <div class="pathfield"><span>/tmp\</span><em><svg class="ic"><use href="#i-folder"/></svg></em></div>
                            <div class="chk saving"><label>Saving</label><i class="box checked"></i>File Extensions</div>
                            <div class="chk cache"><i class="box"></i>Cache Result</div>
                            <div class="row format"><label>File Format</label><span class="select"><svg class="ic"><use href="#i-image"/></svg><em>PNG</em><svg class="chev"><use href="#i-chev"/></svg></span></div>
                            <div class="row tight"><label>Color</label><div class="opts"><span>BW</span><span>RGB</span><span class="on">RGBA</span></div></div>
                            <div class="row tight"><label>Color Depth</label><div class="opts half"><span class="on">8</span><span>16</span></div></div>
                            <div class="row tight"><label>Compression</label><span class="slider"><i></i><em>15%</em></span></div>
                            <div class="row peek"><span class="peek-bar"></span></div>
                        </div>
                    </div>
                </div>
            </section>
        </div>
    </div>

    <footer class="statusbar">
        <svg class="mouse"><use href="#i-mouse"/></svg>
        <svg class="mouse"><use href="#i-mousem"/></svg>
        <svg class="mouse"><use href="#i-mouser"/></svg>
        <span class="version">2.90.0</span>
    </footer>
    <div class="bottomline"><span></span></div>
</body>
</html>
```

FILE: styles.css
```css
* {
    margin: 0;
    padding: 0;
    box-sizing: border-box;
}

html, body {
    width: 1366px;
    height: 768px;
    overflow: hidden;
}

body {
    font-family: "Noto Sans", sans-serif;
    font-size: 10.6px;
    color: #c2c2c2;
    background: #232323;
    display: flex;
    flex-direction: column;
}

em, i, b, u {
    font-style: normal;
    font-weight: normal;
    text-decoration: none;
}

.defs {
    position: absolute;
}

.ic {
    width: 16px;
    height: 16px;
    flex: none;
    color: #c8c8c8;
}

.chev {
    width: 10px;
    height: 10px;
    flex: none;
    color: #c8c8c8;
}

/* window title */
.titlebar {
    height: 23px;
    flex: none;
    background: #fff;
    color: #111;
    display: flex;
    align-items: center;
    padding-left: 3px;
}

.title-logo {
    width: 16px;
    height: 16px;
    color: #e0872e;
}

.title-text {
    margin-left: 4px;
    font-family: Roboto, sans-serif;
    font-size: 11.7px;
}

.winbtns {
    margin-left: auto;
    display: flex;
    gap: 34px;
    padding-right: 19px;
}

/* top bar */
.topbar {
    height: 27px;
    flex: none;
    background: #2b2b2b;
    display: flex;
    position: relative;
}

.top-logo {
    width: 16px;
    height: 16px;
    margin: 5px 0 0 9px;
    color: #bdbdbd;
}

.menus {
    display: flex;
    margin-left: 10px;
    gap: 15px;
    padding-top: 4px;
    width: 220px;
    flex: none;
    font-size: 10.6px;
    line-height: 16px;
    color: #a8a8a8;
}

.tabs {
    display: flex;
    gap: 3px;
    padding-top: 5px;
    height: 25px;
    font-size: 10.6px;
    margin-right: 7px;
}

.tab {
    padding: 3px 8.15px 0;
    background: #343434;
    border-radius: 5px 5px 0 0;
    color: #ababab;
    white-space: nowrap;
}

.tab.active {
    background: #5b5b5b;
    color: #cfcfcf;
}

.tab-add {
    padding: 2px 5px 0;
    font-size: 14px;
    line-height: 16px;
}

.datablock {
    display: flex;
    height: 19px;
    margin-top: 4px;
    border-radius: 4px;
    background: #2a2a2a;
    border: 1px solid #222;
}

.scene-block {
    width: 191px;
    margin-right: 7px;
}

.layer-block {
    width: 190px;
}

.db-type {
    width: 31px;
    background: #545454;
    border-radius: 3px 0 0 3px;
    display: flex;
    align-items: center;
    padding-left: 3px;
}

.db-type .ic {
    width: 15px;
    height: 15px;
}

.db-name {
    flex: 1;
    padding-left: 7px;
    line-height: 17px;
    font-size: 11px;
}

.db-btn {
    width: 20px;
    display: flex;
    align-items: center;
    justify-content: center;
    background: #3a3a3a;
}

.db-btn.dim {
    border-radius: 0 3px 3px 0;
}

.db-btn.dim .ic {
    color: #666;
}

/* main area */
.workspace {
    flex: 1;
    display: flex;
    min-height: 0;
    height: 695px;
}

.viewport {
    width: 1128px;
    flex: none;
    position: relative;
    overflow: hidden;
    background-color: #434343;
    background-image:
        linear-gradient(to right, #4d4d4d 1px, transparent 1px),
        linear-gradient(to bottom, #4d4d4d 1px, transparent 1px);
    background-size: 53.35px 53.35px;
    background-position: 24.5px 20.5px;
    border-radius: 5px 5px 0 0;
}

.grid-major {
    position: absolute;
    left: 398px;
    top: 25px;
    bottom: 0;
    width: 1px;
    background: #555;
}

.btn {
    display: inline-flex;
    align-items: center;
    height: 19px;
    background: #545454;
    border: 1px solid #2c2c2c;
    border-radius: 4px;
    flex: none;
    color: #c8c8c8;
}

.w18 {
    width: 19px;
    justify-content: center;
}

.w26 {
    width: 27px;
    padding-left: 2px;
}

.w30 {
    width: 31px;
    padding-left: 3px;
}

.w32 {
    width: 32px;
    padding-left: 4px;
}

.seg {
    display: flex;
    height: 19px;
    background: #545454;
    border: 1px solid #2c2c2c;
    border-radius: 4px;
    flex: none;
    overflow: hidden;
}

.seg > span {
    width: 19px;
    display: flex;
    align-items: center;
    justify-content: center;
    border-left: 1px solid #3a3a3a;
}

.seg > span:first-child {
    border-left: 0;
}

.seg .on {
    background: #d25a2e;
}

.seg .dimmed {
    background: #4a4a4a;
}

.seg .dimmed .ic {
    color: #8e8e8e;
}

.toolhead {
    height: 25px;
    background: #444;
    display: flex;
    align-items: center;
    padding-left: 8px;
}

.active-tool {
    width: 22px;
    height: 22px;
    margin-left: 12px;
}

.modes {
    margin-left: 12px;
}

.orient {
    margin-left: 255px;
    width: 78px;
    padding-left: 3px;
}

.orient em {
    margin-left: 5px;
    flex: 1;
    font-size: 10.4px;
}

.pivot {
    margin-left: 6px;
}

.snap {
    margin-left: 5px;
}

.snap .wide, .prop .wide {
    width: 32px;
}

.prop {
    margin-left: 6px;
}

.mirror {
    margin-left: 288px;
    color: #999;
}

.xyz {
    margin-left: 2px;
}

.xyz > span {
    width: 16px;
    font-size: 11px;
}

.automerge {
    margin-left: 5px;
}

.automerge .ic {
    color: #8e8e8e;
}

.options {
    margin-left: 6px;
    width: 62px;
    padding-left: 6px;
    justify-content: space-between;
    padding-right: 2px;
    font-size: 11px;
}

.modehead {
    height: 25px;
    display: flex;
    align-items: center;
    padding-left: 9px;
}

.editmode {
    width: 110px;
    padding-left: 3px;
}

.editmode em {
    margin-left: 4px;
    flex: 1;
    font-size: 10.2px;
}

.selmodes {
    margin-left: 5px;
}

.vmenu {
    display: flex;
    gap: 15px;
    margin-left: 11px;
    width: 678px;
    flex: none;
    font-size: 10.8px;
    color: #b5b5b5;
}

.visib .ic {
    width: 15px;
    height: 15px;
}

.pair {
    margin-left: 5px;
}

.pair + .pair {
    margin-left: 6px;
}

.xray {
    margin-left: 6px;
}

.shading {
    margin-left: 7px;
}

.shading > span {
    width: 19.3px;
}

.viewinfo {
    position: absolute;
    left: 67px;
    top: 58px;
    font-size: 10.4px;
    line-height: 18px;
    color: #d2d2d2;
}

.axis-y {
    position: absolute;
    left: 932px;
    top: 25px;
    bottom: 0;
    width: 1px;
    background: #4f8a5f;
}

/* the mesh on the canvas */
.plane {
    position: absolute;
    left: 403px;
    top: 120px;
    width: 322px;
    height: 483px;
    background: #ccb6aa;
    border: solid #d8652f;
    border-width: 2px 2px 3px 3px;
    border-top-color: #e99a78;
    box-shadow: 0 -1px 0 #6b4a3e;
}

.origin {
    position: absolute;
    left: 154px;
    top: 237px;
    width: 6px;
    height: 6px;
    border-radius: 50%;
    background: #e09a3c;
    border: 1px solid #7a4a10;
}

.len {
    position: absolute;
    color: #f2f2f2;
    font-size: 11.5px;
    line-height: 14px;
}

.l-tl { left: 403px; top: 111px; }
.l-tc { left: 564px; top: 111px; }
.l-tr { left: 724px; top: 111px; }
.l-ml { left: 403px; top: 351px; }
.l-mr { left: 724px; top: 351px; }
.l-bl { left: 403px; top: 591px; }
.l-bc { left: 564px; top: 591px; }
.l-br { left: 724px; top: 591px; }

/* tools */
.toolbar {
    position: absolute;
    left: 8px;
    top: 59px;
    display: flex;
    flex-direction: column;
    gap: 5px;
    width: 41px;
}

.toolgroup {
    background: #545454;
    border: 1px solid #2c2c2c;
    border-radius: 4px;
    overflow: hidden;
    flex: none;
}

.tool {
    position: relative;
    display: flex;
    align-items: center;
    justify-content: center;
    height: 35px;
    border-top: 1px solid #2c2c2c;
}

.tool:first-child {
    border-top: 0;
    height: 33px;
}

.tool svg {
    width: 24px;
    height: 24px;
}

.tool.on {
    background: #d25a2e;
}

.corner::after {
    content: "";
    position: absolute;
    right: 2px;
    bottom: 2px;
    border-left: 5px solid transparent;
    border-bottom: 5px solid #bdbdbd;
}

.navgizmo {
    position: absolute;
    left: 1033px;
    top: 57px;
}

.gz {
    font-size: 11px;
    text-anchor: middle;
    fill: #1c1c1c;
    font-family: "Noto Sans", sans-serif;
}

.navbtns {
    position: absolute;
    left: 1091px;
    top: 142px;
    display: flex;
    flex-direction: column;
    gap: 4px;
}

.navbtns span {
    width: 26px;
    height: 26.6px;
    border-radius: 50%;
    background: #383838;
    display: flex;
    align-items: center;
    justify-content: center;
}

.side-arrow {
    position: absolute;
    left: 1118px;
    top: 66px;
    width: 10px;
    height: 14px;
    background: #383838;
    border-radius: 4px 0 0 4px;
    display: flex;
    align-items: center;
}

/* right column */
.rightcol {
    width: 235px;
    margin-left: 3px;
    flex: none;
    display: flex;
    flex-direction: column;
    gap: 3px;
    min-height: 0;
}

.outliner {
    height: 222px;
    flex: none;
    overflow: hidden;
    background: #454545;
    border-radius: 5px 5px 0 0;
}

.ol-head {
    height: 25px;
    background: #3f3f3f;
    display: flex;
    align-items: center;
    padding-left: 1px;
}

.ol-search {
    width: 111px;
    height: 19px;
    margin-left: 16px;
    background: #343434;
    border-radius: 4px;
    padding-left: 3px;
    display: flex;
    align-items: center;
}

.ol-filter {
    margin-left: 17px;
    margin-right: 6px;
}

.ol-root {
    height: 21px;
    line-height: 24px;
    margin-left: -5px;
    color: #b8b8b8;
    background: #3f3f3f;
    overflow: hidden;
}

.ol-row {
    height: 20px;
    display: flex;
    align-items: center;
    padding-left: 12px;
    position: relative;
    background: #414141;
    color: #c6c6c6;
}

.ol-row.alt {
    background: #484848;
}

.ol-row.coll {
    background: #4b4b4b;
    padding-left: 0;
}

.ol-row.off {
    color: #7d7d7d;
}

.ol-row.off .tree {
    opacity: .6;
}

.ol-row.off .mod, .ol-row.off .data {
    opacity: .55;
}

.ol-row::before {
    content: "";
    position: absolute;
    left: 0;
    top: 10px;
    width: 12px;
    height: 1px;
    background: #6a6a6a;
}

.ol-row.coll::before {
    display: none;
}

.name {
    margin-left: 6px;
    padding-top: 2px;
}

.check-clip {
    width: 6px;
    height: 10px;
    background: #d8d8d8;
    flex: none;
}

.coll-ic {
    width: 19px;
    height: 19px;
    margin-left: 5px;
    border: 1px solid #6a6a6a;
    border-radius: 4px;
    background: #505050;
    display: flex;
    align-items: center;
    justify-content: center;
}

.coll .name {
    margin-left: 3px;
}

.data {
    margin-left: 22px;
    color: #84c795;
}

.data.tight {
    margin-left: 4px;
}

.mod {
    margin-left: 23px;
    color: #7fa6dc;
}

.camdata {
    width: 20px;
    height: 20px;
    margin-left: 20px;
    background: #5d7462;
    border-radius: 4px;
    display: flex;
    align-items: center;
    justify-content: center;
}

.camdata .ic {
    color: #a9dcb5;
}

.restrict {
    position: absolute;
    left: 149px;
    top: 2px;
    display: flex;
    gap: 4px;
}

.restrict .ic {
    color: #d8d8d8;
}

.off .restrict .ic:nth-child(n+3) {
    color: #9a9a9a;
}

/* properties */
.props {
    flex: 1;
    min-height: 0;
    display: flex;
    flex-direction: column;
    overflow: hidden;
}

.pr-head {
    height: 23px;
    flex: none;
    background: #3f3f3f;
    border-radius: 5px 5px 0 0;
    display: flex;
    align-items: center;
    padding-left: 8px;
    position: relative;
}

.pr-scene {
    margin-left: 14px;
}

.pr-title {
    margin-left: 6px;
    font-size: 11px;
}

.pr-pin {
    margin-left: auto;
    margin-right: 10px;
}

.pr-body {
    flex: 1;
    display: flex;
    min-height: 0;
}

.pr-tabs {
    width: 27px;
    flex: none;
    background: #3c3c3c;
    padding-top: 12px;
    display: flex;
    flex-direction: column;
    gap: 7px;
    align-items: flex-end;
}

.ptabs {
    display: flex;
    flex-direction: column;
    background: #2f2f2f;
    border-radius: 5px 0 0 5px;
}

.ptabs + .ptabs {
    margin-top: 2px;
}

.ptab {
    width: 26px;
    height: 28px;
    display: flex;
    align-items: center;
    justify-content: center;
    background: #2f2f2f;
    border-radius: 5px 0 0 5px;
}

.ptab.active {
    background: #5c5c5c;
}

.pr-content {
    flex: 1;
    background: #474747;
    overflow: hidden;
    min-width: 0;
}

.panel-top {
    padding: 0 9px 0 8px;
}

.row {
    display: grid;
    grid-template-columns: 68px 115px;
    column-gap: 8px;
    align-items: center;
    margin-top: 6px;
}

.row.first {
    margin-top: -6px;
}

label {
    text-align: right;
    color: #b4b4b4;
    font-size: 10.8px;
    margin-top: -2px;
}

.row .stack {
    line-height: 19.5px;
}

.chk {
    display: flex;
    align-items: center;
    padding-left: 76px;
    height: 20px;
    gap: 2px;
    font-size: 10.4px;
    color: #bdbdbd;
}

.chk.gap {
    margin-top: 5px;
}

.box {
    width: 14px;
    height: 14px;
    border: 1px solid #8a8a8a;
    border-radius: 3px;
    background: #4a4a4a;
    flex: none;
    position: relative;
}

.box.checked {
    background: #d0d0d0;
    border-color: #d0d0d0;
}

.box.checked::after {
    content: "";
    position: absolute;
    left: 4px;
    top: 1px;
    width: 4px;
    height: 8px;
    border: solid #111;
    border-width: 0 2px 2px 0;
    transform: rotate(40deg);
}

.slider-full {
    height: 20px;
    background: #d25a2e;
    border-radius: 10px;
    text-align: center;
    color: #eee;
    line-height: 18px;
}

.numgroup {
    display: flex;
    flex-direction: column;
    border-radius: 9px;
    overflow: hidden;
    border: 1px solid #2c2c2c;
    background: #363636;
}

.numgroup span {
    height: 19px;
    text-align: center;
    line-height: 18px;
    border-top: 1px solid #2a2a2a;
    color: #cfcfcf;
}

.numgroup span:first-child {
    border-top: 0;
}

.frames {
    margin-top: 5px;
}

.select {
    height: 20px;
    background: #5a5a5a;
    border: 1px solid #2c2c2c;
    border-radius: 4px;
    display: flex;
    align-items: center;
    justify-content: space-between;
    padding: 0 2px 0 7px;
    color: #cfcfcf;
}

.subpanel {
    height: 21px;
    margin-top: 10px;
    padding-left: 18px;
    line-height: 21px;
    color: #bdbdbd;
    position: relative;
}

.tri {
    width: 0;
    height: 0;
    display: inline-block;
    flex: none;
}

.tri.right {
    border-left: 5px solid #a8a8a8;
    border-top: 3.5px solid transparent;
    border-bottom: 3.5px solid transparent;
}

.tri.down {
    border-top: 5px solid #b8b8b8;
    border-left: 3.5px solid transparent;
    border-right: 3.5px solid transparent;
}

.subpanel .tri {
    margin-right: 6px;
}

.panel-head {
    height: 25px;
    background: #5e5e5e;
    display: flex;
    align-items: center;
    padding-left: 9px;
    color: #c8c8c8;
    gap: 6px;
}

.panel-head.open {
    height: 24px;
}

.panel-head .box {
    background: #5e5e5e;
    margin: 0 -4px 0 1px;
}

.grip {
    margin-left: auto;
    margin-right: 7px;
    width: 12px;
    height: 6px;
    background-image: radial-gradient(#2b2b2b 0.7px, transparent 0.8px);
    background-size: 2.4px 2.4px;
}

.panel-out {
    padding: 8px 9px 0 8px;
}

.pathfield {
    display: flex;
    height: 20px;
    background: #2f2f2f;
    border: 1px solid #2a2a2a;
    border-radius: 4px;
    overflow: hidden;
    color: #cfcfcf;
}

.pathfield span {
    flex: 1;
    padding-left: 7px;
    line-height: 18px;
}

.pathfield em {
    width: 20px;
    background: #5a5a5a;
    display: flex;
    align-items: center;
    justify-content: center;
}

.saving {
    margin-top: 5px;
    padding-left: 0;
}

.saving label {
    width: 68px;
    margin-right: 6px;
}

.cache {
    margin-top: 2px;
}

.format {
    margin-top: 5px;
}

.format .select em {
    flex: 1;
    margin-left: 10px;
}

.format .select {
    padding-left: 3px;
}

.tight {
    margin-top: 2px;
}

.opts {
    display: grid;
    grid-template-columns: 37px 38px 40px;
    height: 20px;
    border: 1px solid #2c2c2c;
    border-radius: 4px;
    background: #5a5a5a;
    overflow: hidden;
    text-align: center;
    line-height: 18px;
    color: #cfcfcf;
}

.opts span + span {
    border-left: 1px solid #363636;
}

.opts.half {
    grid-template-columns: 1fr 1fr;
}

.opts .on {
    background: #d25a2e;
    color: #f0d8cc;
}

.slider {
    height: 20px;
    border-radius: 10px;
    background: #363636;
    border: 1px solid #2c2c2c;
    overflow: hidden;
    position: relative;
    text-align: center;
    line-height: 18px;
    color: #d5d5d5;
}

.slider i {
    position: absolute;
    left: 0;
    top: 0;
    bottom: 0;
    width: 15px;
    background: #d25a2e;
}

.slider em {
    position: relative;
}

.peek {
    margin-top: 8px;
}

.peek-bar {
    grid-column: 2;
    width: 15px;
    height: 4px;
    background: #a85a3a;
    border-radius: 7px 0 0 0;
}

/* bottom */
.statusbar {
    height: 18px;
    flex: none;
    background: #454545;
    border-top: 1px solid #2a2a2a;
    display: flex;
    align-items: center;
    padding-left: 11px;
    position: relative;
}

.mouse {
    width: 12px;
    height: 14px;
    color: #c8c8c8;
    margin-right: 224px;
}

.version {
    position: absolute;
    right: 16px;
    top: 2px;
    color: #a8a8a8;
    font-size: 12px;
}

.bottomline {
    height: 3px;
    flex: none;
    background: #353535;
    position: relative;
}

.bottomline span {
    position: absolute;
    left: 628px;
    top: 0;
    width: 36px;
    height: 3px;
    background: #6a6a6a;
}
```
